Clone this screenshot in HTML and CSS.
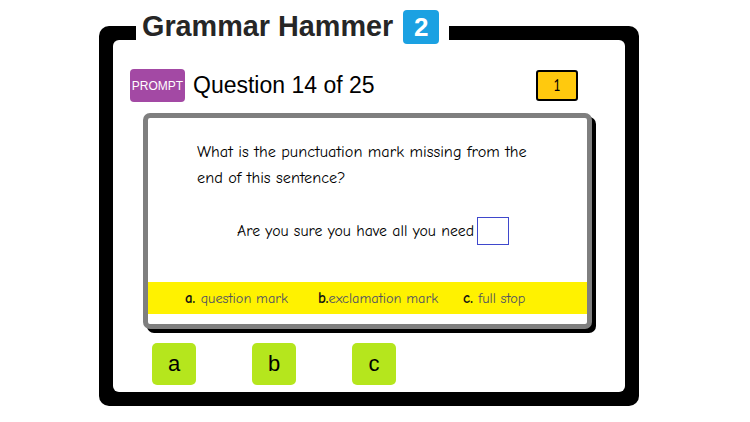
FILE: index.html
```html
<!DOCTYPE html>
<html>
<head>
<meta charset="utf-8">
<link rel="stylesheet" href="styles.css">
</head>
<body>
<div class="frame">
  <div class="title">
    <span class="title-text">Grammar Hammer</span>
    <span class="level">2</span>
  </div>
  <div class="inner">
    <div class="head">
      <div class="prompt">PROMPT</div>
      <div class="qnum">Question 14 of 25</div>
      <div class="score">1</div>
    </div>
    <div class="card">
      <div class="question">What is the punctuation mark missing from the<br>end of this sentence?</div>
      <div class="sentence"><span>Are you sure you have all you need</span><span class="blank"></span></div>
      <div class="options">
        <div class="opt"><b>a.</b> <span>question mark</span></div>
        <div class="opt"><b>b.</b><span>exclamation mark</span></div>
        <div class="opt"><b>c.</b> <span>full stop</span></div>
      </div>
    </div>
    <div class="answers">
      <div class="ans">a</div>
      <div class="ans">b</div>
      <div class="ans">c</div>
    </div>
  </div>
</div>
</body>
</html>
```

FILE: styles.css
```css
html, body {
  margin: 0;
  padding: 0;
  background: #fff;
  width: 750px;
  height: 422px;
  overflow: hidden;
}
body {
  font-family: "Liberation Sans", Arial, sans-serif;
}
.frame {
  position: relative;
  margin: 26px 0 0 99px;
  width: 540px;
  height: 380px;
  box-sizing: border-box;
  padding: 14px;
  background: #000;
  border-radius: 10px;
}
.inner {
  background: #fff;
  border-radius: 6px;
  height: 352px;
  display: flex;
  flex-direction: column;
}
.title {
  position: absolute;
  left: 37px;
  top: -26px;
  height: 44px;
  padding: 0 10px 0 6px;
  background: #fff;
  display: flex;
  align-items: flex-end;
  gap: 10px;
}
.title-text {
  font-weight: bold;
  font-size: 28.8px;
  color: #262626;
  line-height: 1;
  margin-bottom: 3px;
}
.level {
  width: 36px;
  height: 34px;
  background: #1ba1e2;
  color: #fff;
  border-radius: 4px;
  font-weight: bold;
  font-size: 26px;
  display: flex;
  align-items: center;
  justify-content: center;
}
.head {
  display: flex;
  align-items: center;
  padding: 29px 47px 0 17px;
}
.prompt {
  width: 55px;
  height: 33px;
  background: #a349a4;
  color: #fff;
  border-radius: 4px;
  font-size: 12px;
  display: flex;
  align-items: center;
  justify-content: center;
}
.qnum {
  margin-left: 8px;
  font-size: 23px;
  color: #000;
  flex: 1;
}
.score {
  width: 42px;
  height: 31px;
  box-sizing: border-box;
  border: 2px solid #000;
  border-radius: 3px;
  background: #ffc90e;
  font-family: "Comic Sans MS", "Comic Neue", "DejaVu Sans", sans-serif;
  font-size: 18px;
  display: flex;
  align-items: center;
  justify-content: center;
}
.card {
  margin: 11px 0 0 30px;
  width: 449px;
  height: 216px;
  box-sizing: border-box;
  border: 5px solid #7f7f7f;
  border-radius: 7px;
  box-shadow: 4px 4px 0 #000;
  background: #fff;
  font-family: "Comic Sans MS", "Comic Neue", "DejaVu Sans", sans-serif;
  display: flex;
  flex-direction: column;
}
.question {
  padding: 21px 0 0 49px;
  font-size: 16.3px;
  line-height: 26px;
  color: #000;
}
.sentence {
  margin-top: 26px;
  padding-left: 89px;
  display: flex;
  align-items: flex-end;
  font-size: 15.8px;
  color: #000;
}
.sentence span:first-child {
  margin-bottom: 5px;
}
.blank {
  margin-left: 3px;
  width: 32px;
  height: 28px;
  box-sizing: border-box;
  border: 1.5px solid #3f48cc;
}
.options {
  margin-top: auto;
  margin-bottom: 10px;
  height: 32px;
  background: #fff200;
  display: flex;
  align-items: center;
  gap: 30px;
  padding-left: 37px;
}
.opt b {
  font-size: 15px;
  color: #111;
}
.opt span {
  font-size: 14.3px;
  color: #4f5064;
}
.opt:last-child {
  margin-left: -5px;
}
.answers {
  display: flex;
  gap: 56px;
  padding: 14px 0 0 39px;
}
.ans {
  width: 44px;
  height: 42px;
  background: #b5e61d;
  border-radius: 5px;
  font-size: 22px;
  color: #000;
  display: flex;
  align-items: center;
  justify-content: center;
}
```
